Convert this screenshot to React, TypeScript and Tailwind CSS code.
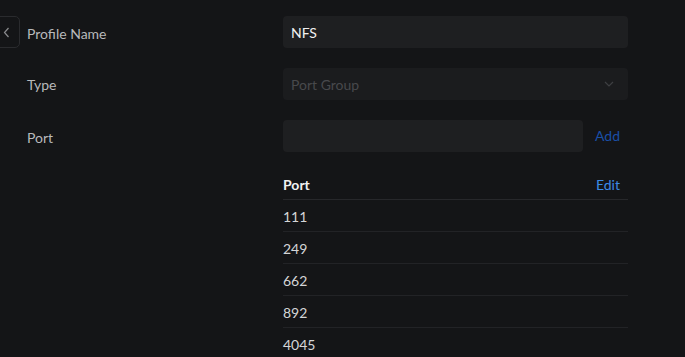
import React from "react";

const ports = ["111", "249", "662", "892", "4045"];

export default function App() {
  return (
    <div
      className="w-[685px] h-[357px] overflow-hidden bg-[#141517] relative"
      style={{ fontFamily: "Lato, 'Noto Sans', sans-serif" }}
    >
      <div className="absolute left-[-12px] top-[16px] w-[32px] h-[32px] rounded-[5px] border border-[#2a2b2e] flex items-center justify-end pr-[9px]">
        <svg width="7" height="11" viewBox="0 0 7 11" fill="none">
          <path d="M5.5 1 L1.5 5.5 L5.5 10" stroke="#8a8b8e" strokeWidth="1.2" />
        </svg>
      </div>
      <div className="pl-[27px] pt-[16px] flex">
        <div className="w-[256px] flex flex-col text-[14px] text-[#b8b9bb]">
          <div className="h-[32px] flex items-center pt-[2px]">Profile Name</div>
          <div className="h-[32px] mt-[20px] flex items-center pt-[1px]">Type</div>
          <div className="h-[32px] mt-[20px] flex items-center pt-[2px]">Port</div>
        </div>
        <div className="w-[345px] flex flex-col">
          <div className="h-[32px] rounded-[4px] bg-[#1e1f21] flex items-center px-[8px] pt-[1px] text-[14px] text-[#f0f0f0]">
            NFS
          </div>
          <div className="h-[32px] mt-[20px] rounded-[4px] bg-[#1b1c1e] flex items-center justify-between pl-[8px] pr-[14px] text-[14px] text-[#48494c]">
            <span>Port Group</span>
            <svg width="10" height="6" viewBox="0 0 10 6" fill="none">
              <path d="M1 1 L5 5 L9 1" stroke="#3e3f42" strokeWidth="1.2" />
            </svg>
          </div>
          <div className="h-[32px] mt-[20px] flex items-center">
            <div className="w-[300px] h-[32px] rounded-[4px] bg-[#1e1f21]" />
            <span className="ml-[12px] mb-[2px] text-[14px] text-[#1a4fa6]">Add</span>
          </div>
          <div className="mt-[17px] h-[31px] flex items-center justify-between border-b border-[#27282b] pt-[1px]">
            <span className="text-[14px] font-bold text-[#f2f2f2]">Port</span>
            <span className="text-[14px] text-[#3d8be6] mr-[8px] mb-[1px]">Edit</span>
          </div>
          {ports.map((p) => (
            <div
              key={p}
              className="h-[32px] flex items-center border-b border-[#222326] pt-[1px] text-[14px] text-[#d4d5d7]"
            >
              {p}
            </div>
          ))}
        </div>
      </div>
    </div>
  );
}
